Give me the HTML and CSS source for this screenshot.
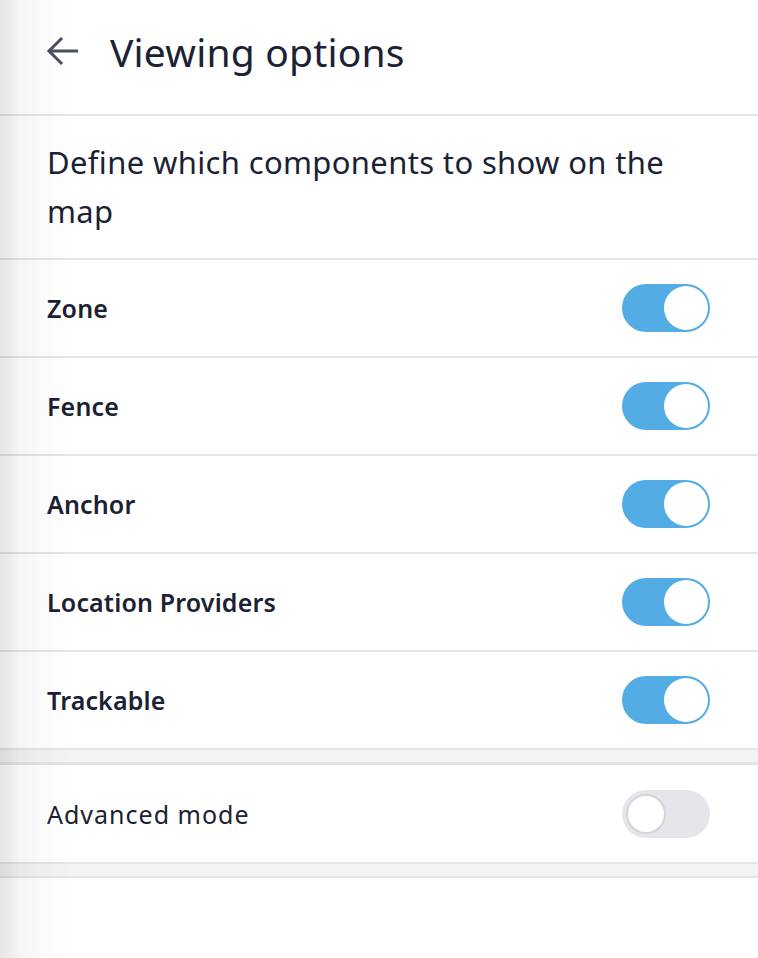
FILE: index.html
```html
<!DOCTYPE html>
<html>
<head>
<meta charset="utf-8">
<link rel="stylesheet" href="styles.css">
</head>
<body>
<div class="panel">
  <header class="header">
    <svg class="back" width="32" height="30" viewBox="0 0 32 30" fill="none" stroke="#4a505e" stroke-width="3" stroke-linecap="square">
      <path d="M31 15H4"/>
      <path d="M15 3L3 15l12 12"/>
    </svg>
    <h1 class="title">Viewing options</h1>
  </header>
  <p class="desc">Define which components to show on the map</p>
  <ul class="list">
    <li class="row"><span class="label">Zone</span><span class="toggle on"><span class="knob"></span></span></li>
    <li class="row"><span class="label">Fence</span><span class="toggle on"><span class="knob"></span></span></li>
    <li class="row"><span class="label">Anchor</span><span class="toggle on"><span class="knob"></span></span></li>
    <li class="row"><span class="label">Location Providers</span><span class="toggle on"><span class="knob"></span></span></li>
    <li class="row"><span class="label">Trackable</span><span class="toggle on"><span class="knob"></span></span></li>
  </ul>
  <div class="band"></div>
  <div class="row adv"><span class="label light">Advanced mode</span><span class="toggle off"><span class="knob"></span></span></div>
  <div class="band last"></div>
</div>
<div class="shade"></div>
</body>
</html>
```
FILE: styles.css
```css
* { box-sizing: border-box; }
html, body { margin: 0; padding: 0; background: #fff; }
body {
  font-family: "Noto Sans", "Open Sans", sans-serif;
  color: #1b2233;
  width: 758px;
  height: 958px;
  overflow: hidden;
}
.panel { width: 758px; }
.header {
  height: 116px;
  display: flex;
  align-items: center;
  padding: 0 0 12px 46px;
  border-bottom: 2px solid #e3e3e8;
}
.back { flex: none; margin-right: 32px; }
.title {
  margin: 0;
  font-size: 39px;
  font-weight: 400;
  letter-spacing: 0.2px;
}
.desc {
  margin: 0;
  padding: 22px 47px 22px;
  font-size: 31px;
  letter-spacing: 0.35px;
  line-height: 49px;
  border-bottom: 2px solid #e3e3e8;
}
.list { list-style: none; margin: 0; padding: 0; }
.row {
  height: 98px;
  display: flex;
  align-items: center;
  justify-content: space-between;
  padding: 0 48px 0 47px;
  border-bottom: 2px solid #e3e3e8;
}
.label { font-size: 25px; font-weight: 600; letter-spacing: 0.15px; }
.label.light { font-weight: 400; letter-spacing: 1px; }
.band {
  height: 15px;
  background: #f2f3f5;
  border-bottom: 3px solid #e3e3e8;
}
.band.last { height: 14px; border-bottom-width: 2px; }
.adv { height: 99px; }
.toggle {
  width: 88px;
  height: 48px;
  border-radius: 24px;
  display: flex;
  align-items: center;
  flex: none;
}
.toggle.on { background: #53ace3; justify-content: flex-end; padding: 2px; }
.toggle.on .knob { width: 44px; height: 44px; border-radius: 50%; background: #fff; }
.toggle.off { background: #e5e6ea; justify-content: flex-start; padding: 4px; }
.toggle.off .knob { width: 40px; height: 40px; border-radius: 50%; background: #fff; border: 2px solid #d3d5db; }
.shade {
  position: fixed;
  left: 0; top: 0; bottom: 0;
  width: 70px;
  pointer-events: none;
  background: linear-gradient(to right, rgba(0,0,0,0.10), rgba(0,0,0,0.035) 30%, rgba(0,0,0,0) 100%);
}
```
